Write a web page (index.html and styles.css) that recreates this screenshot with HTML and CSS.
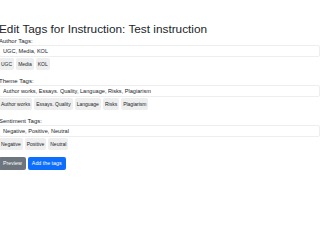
FILE: index.html
```html
<!DOCTYPE html>
<html lang="en">

<head>
    <meta charset="utf-8">
    <meta name="viewport" content="width=device-width, initial-scale=1.0">
    <title>Edit Tags</title>
    <link rel="stylesheet" href="styles.css">
</head>

<body>
    <main class="container">
        <h3>Edit Tags for Instruction: Test instruction</h3>

        <section class="group">
            <label for="author">Author Tags:</label>
            <input type="text" id="author" value="UGC, Media, KOL">
            <div class="tags">
                <span class="tag">UGC</span>
                <span class="tag">Media</span>
                <span class="tag">KOL</span>
            </div>
        </section>

        <section class="group">
            <label for="theme">Theme Tags:</label>
            <input type="text" id="theme" value="Author works, Essays. Quality, Language, Risks, Plagiarism">
            <div class="tags">
                <span class="tag">Author works</span>
                <span class="tag">Essays. Quality</span>
                <span class="tag">Language</span>
                <span class="tag">Risks</span>
                <span class="tag">Plagiarism</span>
            </div>
        </section>

        <section class="group">
            <label for="sentiment">Sentiment Tags:</label>
            <input type="text" id="sentiment" value="Negative, Positive, Neutral">
            <div class="tags">
                <span class="tag">Negative</span>
                <span class="tag">Positive</span>
                <span class="tag">Neutral</span>
            </div>
        </section>

        <div class="buttons">
            <button class="btn grey">Preview</button>
            <button class="btn blue">Add the tags</button>
        </div>
    </main>
</body></html>
```

FILE: styles.css
```css
* {
    box-sizing: border-box;
}

body {
    margin: 0;
    background-color: #ffffff;
    color: #212529;
    font-family: "Liberation Sans", Arial, sans-serif;
}

.container {
    margin-left: -1px;
    padding-top: 22px;
}

h3 {
    margin: 0 0 1px 0;
    font-size: 11.8px;
    font-weight: 400;
    line-height: 14px;
}

.group {
    margin-bottom: 7px;
}

label {
    display: block;
    font-size: 6px;
    line-height: 8px;
}

input {
    display: block;
    width: 100%;
    height: 12px;
    padding: 0 3px;
    border: 1px solid #eceeef;
    border-radius: 2px;
    font-family: inherit;
    font-size: 5.6px;
    color: #212529;
    outline: none;
}

.tags {
    display: flex;
    gap: 2px;
    margin-top: 1px;
}

.tag {
    padding: 2px 2px;
    background-color: #eeeeee;
    border-radius: 2px;
    font-size: 5px;
    line-height: 8px;
}

.buttons {
    display: flex;
    gap: 2px;
    margin-top: 1px;
}

.btn {
    border: none;
    border-radius: 2px;
    padding: 3px 4px;
    font-family: inherit;
    font-size: 5.3px;
    line-height: 7px;
    color: #ffffff;
    cursor: pointer;
}

.grey {
    background-color: #6c757d;
}

.blue {
    background-color: #0d6efd;
}
```
